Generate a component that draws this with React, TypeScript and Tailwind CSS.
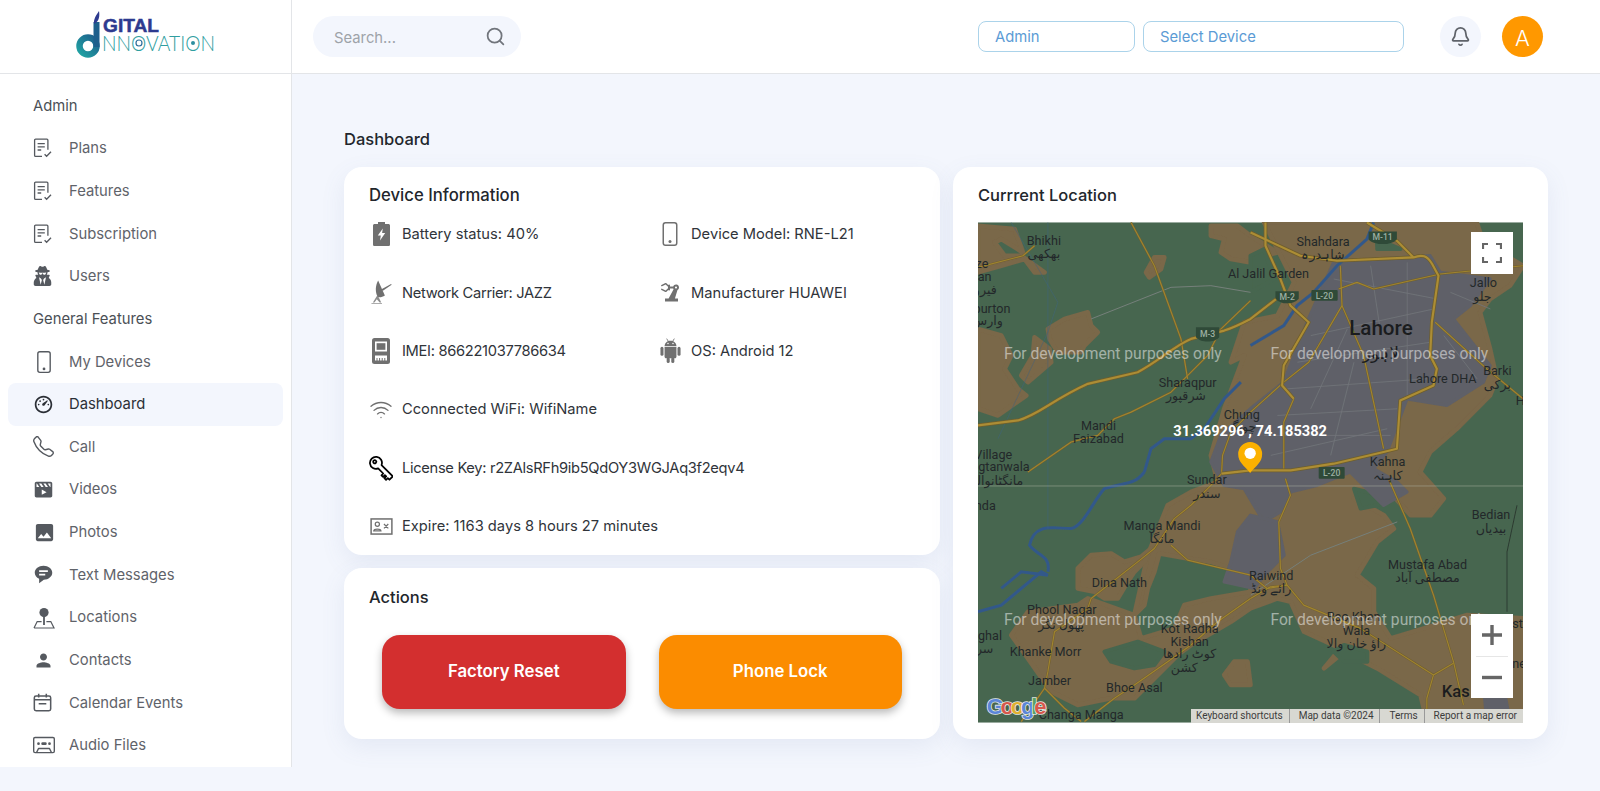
import { Bell, Search, Wifi } from 'lucide-react'
import { BiSolidMessageRoundedDetail, BiSolidMoviePlay } from 'react-icons/bi'
import { BsCassette, BsPhone, BsTelephone } from 'react-icons/bs'
import { FaUserSecret } from 'react-icons/fa'
import { MdPerson, MdPhoto, MdPrecisionManufacturing } from 'react-icons/md'
import { RiDashboard3Line } from 'react-icons/ri'

const font = { fontFamily: 'Inter, "Noto Sans", sans-serif' }

function ChecklistIcon() {
  return (
    <svg viewBox="0 0 20 20" className="w-[20px] h-[20px]" fill="none" stroke="#55595f" strokeWidth="1.3">
      <path d="M9 18.4H2.6c-.6 0-1-.4-1-1V2.2c0-.6.4-1 1-1h11.3c.6 0 1 .4 1 1v9.6" />
      <path d="M4.6 5.6h7.2M4.6 8.8h7.2M4.6 12h3.6" />
      <path d="M11.6 16.2l2 2.1 4.4-4.6" />
    </svg>
  )
}

function PinPlaneIcon() {
  return (
    <svg viewBox="0 0 22 22" className="w-[22px] h-[22px]" fill="none" stroke="#55595f" strokeWidth="1.2">
      <circle cx="11" cy="5.6" r="4.6" fill="#55595f" stroke="none" />
      <path d="M11 9v9" strokeWidth="1.8" />
      <path d="M1 21l3.2-6.4h4.4M13.4 14.6h4.4L21 21H1" />
    </svg>
  )
}

function CalendarIcon() {
  return (
    <svg viewBox="0 0 20 20" className="w-[19px] h-[19px]" fill="none" stroke="#55595f" strokeWidth="1.6">
      <rect x="1.4" y="3.2" width="17.2" height="15.4" rx="1.8" />
      <path d="M6 .8v4M14 .8v4M1.6 7.2h17M6 11.4h8" />
    </svg>
  )
}

function BatteryIcon() {
  return (
    <svg viewBox="0 0 17 24" className="w-[17px] h-[24px]">
      <path d="M5 0h7v2h3.4c.9 0 1.6.7 1.6 1.6v18.8c0 .9-.7 1.6-1.6 1.6H1.6C.7 24 0 23.3 0 22.4V3.6C0 2.7.7 2 1.6 2H5z" fill="#707070" />
      <path d="M9.8 6.5L4.8 13.6h3l-.8 4.8 5.2-7.4h-3.100z" fill="#fff" />
    </svg>
  )
}

function DishIcon() {
  return (
    <svg viewBox="0 0 24 26" className="w-[23px] h-[25px]" fill="#707070">
      <path d="M8.5 0.5C5.5 6 5.2 12.5 8 17.5c2 .8 5 .2 7.5-1.500z" />
      <path d="M12 9.5l10-5.5 .6 1-9.500 6.500z" />
      <path d="M7.500 16L3 23.500h1.600l2.500-3.500 3 3.500h1.600L8.800 17.500z" opacity="0.8" />
      <path d="M1.500 25h11v-1h-11z" opacity="0.6" />
    </svg>
  )
}

function ImeiIcon() {
  return (
    <svg viewBox="0 0 18 26" className="w-[18px] h-[26px]">
      <rect x="0" y="0" width="18" height="26" rx="2.5" fill="#707070" />
      <rect x="3" y="3.5" width="12" height="10" fill="#fff" />
      <rect x="4.6" y="5.2" width="8.8" height="6.6" fill="#707070" />
      <path d="M3 17.5h12v5H3z" fill="#fff" />
      <path d="M5 20v3M7.6 20v3M10.2 20v3M12.8 20v3" stroke="#707070" strokeWidth="1" />
    </svg>
  )
}

function AndroidIcon() {
  return (
    <svg viewBox="0 0 24 26" className="w-[23px] h-[25px]" fill="#707070">
      <path d="M5.800 8.300C6 4.800 8.600 2.700 12 2.700s6 2.100 6.200 5.600z" />
      <path d="M8 .6l1.800 3M16 .6l-1.800 3" stroke="#707070" strokeWidth="0.9" />
      <circle cx="9.400" cy="5.600" r="0.8" fill="#fff" />
      <circle cx="14.600" cy="5.600" r="0.8" fill="#fff" />
      <path d="M5.800 9.200h12.400v10.400c0 .9-.7 1.600-1.600 1.600H7.400c-.9 0-1.600-.7-1.600-1.600z" />
      <rect x="1.500" y="9.200" width="3.200" height="9.200" rx="1.600" />
      <rect x="19.300" y="9.200" width="3.200" height="9.200" rx="1.600" />
      <rect x="8" y="20" width="3.200" height="6" rx="1.600" />
      <rect x="12.800" y="20" width="3.200" height="6" rx="1.600" />
    </svg>
  )
}

function KeyIcon() {
  return (
    <svg viewBox="0 0 26 26" className="w-[26px] h-[26px]" fill="none" stroke="#000" strokeWidth="1.9" strokeLinejoin="round">
      <g transform="rotate(45 8 8)">
        <path d="M13.2 5.3H30.5V10.5H28V13.2H25.5V10.5H23.5V13.2H21V10.5H13.2A6.500 6.500 0 1 1 13.200 5.300z" />
        <circle cx="5.5" cy="8" r="1.7" />
      </g>
    </svg>
  )
}

function ExpireIcon() {
  return (
    <svg viewBox="0 0 24 18" className="w-[23px] h-[17px]" fill="none" stroke="#707070">
      <rect x="1" y="1" width="22" height="16" strokeWidth="1.6" />
      <circle cx="7.6" cy="6.6" r="2.2" strokeWidth="1.3" />
      <path d="M3.8 13.6c.4-2.4 7.2-2.4 7.6 0zM14.6 6.4l4.6 4.6M19.2 6.4l-4.6 4.6" strokeWidth="1.3" />
    </svg>
  )
}

const s = 'text-[#55595f]'
const adminItems = [
  { label: 'Plans', icon: <ChecklistIcon /> },
  { label: 'Features', icon: <ChecklistIcon /> },
  { label: 'Subscription', icon: <ChecklistIcon /> },
  { label: 'Users', icon: <FaUserSecret className={`w-[19px] h-[20px] ${s}`} /> },
]
const generalItems = [
  { label: 'My Devices', icon: <BsPhone className={`w-[22px] h-[22px] ${s}`} /> },
  { label: 'Dashboard', icon: <RiDashboard3Line className="w-[21px] h-[21px] text-[#2b2f36]" />, active: true },
  { label: 'Call', icon: <BsTelephone className={`w-[21px] h-[21px] ${s}`} /> },
  { label: 'Videos', icon: <BiSolidMoviePlay className={`w-[21px] h-[21px] ${s}`} /> },
  { label: 'Photos', icon: <MdPhoto className={`w-[23px] h-[23px] ${s}`} /> },
  { label: 'Text Messages', icon: <BiSolidMessageRoundedDetail className={`w-[21px] h-[21px] ${s}`} /> },
  { label: 'Locations', icon: <PinPlaneIcon /> },
  { label: 'Contacts', icon: <MdPerson className={`w-[21px] h-[21px] ${s}`} /> },
  { label: 'Calendar Events', icon: <CalendarIcon /> },
  { label: 'Audio Files', icon: <BsCassette className={`w-[22px] h-[22px] ${s}`} /> },
]

const g = 'text-[#707070]'
const infoRows = [
  { text: 'Battery status: 40%', icon: <BatteryIcon /> },
  { text: 'Device Model: RNE-L21', icon: <BsPhone className={`w-[26px] h-[26px] ${g}`} /> },
  { text: 'Network Carrier: JAZZ', icon: <DishIcon />, tight: true },
  { text: 'Manufacturer HUAWEI', icon: <MdPrecisionManufacturing className={`w-[27px] h-[27px] -scale-x-100 ${g}`} /> },
  { text: 'IMEI: 866221037786634', icon: <ImeiIcon />, tight: true },
  { text: 'OS: Android 12', icon: <AndroidIcon /> },
  { text: 'Cconnected WiFi: WifiName', icon: <Wifi className={`w-[25px] h-[25px] ${g}`} strokeWidth={1.3} /> },
  null,
  { text: 'License Key: r2ZAlsRFh9ib5QdOY3WGJAq3f2eqv4', icon: <KeyIcon />, wide: true, tight: true },
  null,
  { text: 'Expire: 1163 days 8 hours 27 minutes', icon: <ExpireIcon />, wide: true },
]

function NavRow({ label, icon, active }: { label: string; icon: React.ReactNode; active?: boolean }) {
  return (
    <div className={`flex items-center h-[42.65px] mx-[8px] px-[25px] rounded-lg ${active ? 'bg-[#f3f6fd] text-[#2b2f36]' : 'text-[#5f636a]'}`}>
      <span className="w-[36px] flex-none flex items-center">{icon}</span>
      <span className="text-[14.8px]">{label}</span>
    </div>
  )
}

function Logo() {
  return (
    <svg viewBox="0 0 150 52" className="w-[150px] h-[52px]">
      <defs>
        <linearGradient id="dbowl" x1="0" y1="1" x2="1" y2="0">
          <stop offset="0" stopColor="#21a3a3" />
          <stop offset="1" stopColor="#1d5f8c" />
        </linearGradient>
      </defs>
      <circle cx="16" cy="35" r="8.5" fill="none" stroke="url(#dbowl)" strokeWidth="6.5" />
      <path d="M21.5 36V11h6v25z" fill="#1d5f8c" />
      <path d="M22 13c-.5-5 2-8.500 5-13 .8 5 .5 10-5 13z" fill="#2d3a8f" />
      <text x="31" y="21" fontSize="19" fontWeight="700" fontFamily="Liberation Sans, sans-serif" fill="#2d3a8f" stroke="#2d3a8f" strokeWidth="0.5" textLength="56" lengthAdjust="spacingAndGlyphs">GITAL</text>
      <text x="30" y="40" fontSize="21" fontWeight="300" fontFamily="Lato, sans-serif" fill="#2f9ea0" textLength="113" lengthAdjust="spacingAndGlyphs">NNOVATION</text>
      <circle cx="67" cy="32" r="3" fill="none" stroke="#2d6f9c" strokeWidth="1.2" />
      <circle cx="121" cy="32" r="2" fill="#2d8fa0" />
    </svg>
  )
}

const labels: [string, number, number][] = [
  ['بھکھی', 198, 108], ['Bhikhi', 198, 68], ['ze', 12, 138], ['an', 20, 177], ['فیرو', 22, 215], ['burton', 42, 272], ['وارس', 28, 308],
  ['Al Jalil Garden', 873, 168], ['Mandi', 362, 625], ['Faizabad', 362, 663], ['Sharaqpur', 630, 495], ['شرقپور', 625, 535], ['Chung', 793, 590], ['چونگ', 793, 628],
  ['Village', 46, 712], ['gtanwala', 78, 748], ['مانگٹانوالہ', 55, 788], ['nda', 22, 865], ['Sundar', 688, 786], ['سندر', 688, 828],
  ['Manga Mandi', 553, 925], ['مانگا', 553, 963], ['Dina Nath', 425, 1095], ['Phool Nagar', 252, 1178], ['پھول نگر', 250, 1222], ['ghal', 36, 1255], ['سر', 20, 1295],
  ['Khanke Morr', 203, 1303], ['Jamber', 215, 1390], ['Bhoe Asal', 470, 1412], ['Changa Manga', 310, 1491], ['Kot Radha', 636, 1235], ['Kishan', 636, 1272], ['کوٹ رادھا', 636, 1310], ['کشن', 620, 1350],
  ['Shahdara', 1037, 72], ['شاہدرہ', 1037, 110], ['Jallo', 1519, 195], ['جلو', 1516, 235], ['Lahore DHA', 1397, 483], ['Barki', 1561, 458], ['برکی', 1561, 500], ['H', 1630, 548],
  ['Kahna', 1231, 733], ['کاہنہ', 1231, 775], ['Bedian', 1542, 890], ['بیدیاں', 1542, 932], ['Mustafa Abad', 1351, 1042], ['مصطفی آباد', 1351, 1080], ['Raiwind', 881, 1075], ['رائے ونڈ', 881, 1115],
  ['Rao Khan', 1129, 1198], ['Wala', 1137, 1240], ['راؤ خان والا', 1137, 1278], ['st', 1622, 1218], ['ne', 1626, 1340],
]

const majorRoads = [
  'M0 610L120 595C180 580 220 535 330 485L480 450C540 420 590 370 640 350L740 325C770 315 800 300 819 290L909 220',
  'M819 30L969 100L1079 115L1309 105C1335 95 1350 100 1365 125L1384 160L1364 300L1359 400L1379 440L1369 490L1269 535L1259 680L1219 690L1069 725L940 745L819 745L732 755',
  'M864 0V70L909 170L939 250L994 300L919 430L914 490L949 530',
  'M1169 0L1259 55L1309 105',
]

const minorRoads = [
  'M725 325L819 235',
  'M460 0L530 130L610 350L630 470',
  'M0 135L135 100L170 70',
  'M150 750L280 660L360 640L410 590L460 570L580 510L620 470L690 400L720 340',
  'M949 530L919 600V750',
  'M1089 130L1094 250L994 420L919 480L819 570L760 630L735 700L732 755L700 790L640 850L590 890L530 980L480 1020L340 1130L330 1160L230 1230L210 1350L200 1400L130 1500',
  'M1094 250L1159 400L1219 680',
  'M1084 200L1139 180L1189 200L1389 155L1638 130',
  'M1374 300L1529 440L1638 530',
  'M200 1400L260 1460L310 1500',
  'M819 1130L720 1200L640 1270L570 1320L470 1390L410 1430L320 1500',
  'M580 970L630 1015L819 1060L869 1100L929 1090',
  'M924 770L939 820L904 900L909 1040L929 1090L879 1095L819 1130',
  'M929 1090L979 1150L1149 1220L1369 1360L1349 1430L1349 1503',
  'M1234 770L1299 920L1369 1120L1429 1320L1459 1450',
  'M1369 1360L1429 1325',
]

const streets =
  'M1069 170L1380 230M1000 340L1370 260M960 420L1360 360M930 500L1350 470M900 580L1260 560M1180 130L1210 330M1290 120L1290 520M1000 560L1110 320M1130 420L1060 700M860 640L1240 640M880 700L1230 620M1420 210L1540 260M1400 340L1500 470'

function MapDrawing() {
  return (
    <svg viewBox="0 0 1638 1503" className="absolute inset-0 w-full h-full" fontFamily="Roboto, 'DejaVu Sans', sans-serif">
      <defs>
        <filter id="soft" x="0" y="0" width="100%" height="100%">
          <feGaussianBlur stdDeviation="1.8" />
        </filter>
      </defs>
      <rect width="1638" height="1503" fill="#47664f" />
      <g filter="url(#soft)">
        <g fill="#7a6748" stroke="#7a6748" strokeWidth="14" strokeLinejoin="round">
          <path d="M0 10L110 20L135 90L70 50L50 60L80 100L130 100L200 150L170 150L140 110L70 130L0 150z" />
          <path d="M0 320L70 340L100 400L80 440L120 500L145 520L60 580L0 560z" />
          <path d="M170 345L215 380L220 420L150 480L130 460L165 400z" />
          <path d="M210 320L260 290L330 270L340 310L360 330L320 370L310 390L240 390L215 350z" />
          <path d="M505 150L530 105L560 105L550 140L515 165z" />
          <path d="M700 10L780 10L819 40L900 90L860 100L819 120L760 110L730 90L740 50L700 40z" />
          <path d="M860 0H1499L1519 60L1638 130L1599 190L1539 230L1509 270L1539 380L1559 470L1539 520L1439 620L1359 690L1329 750L1400 830L1360 880L1300 880L1220 790L1130 830L1220 880L1250 920L1200 960L1170 1010L1140 1060L1190 1100L1190 1170L1240 1250L1340 1220L1470 1180L1638 1190V1503H1350L1330 1420L1200 1340L1100 1290L1040 1340L1090 1280L980 1230L940 1140L900 1130L819 1160L760 1200L640 1270L600 1300L470 1430L400 1430L300 1450L220 1410L150 1310L100 1240L150 1170L300 1150L330 1130L470 1180L490 1250L590 1220L620 1150L700 1130L819 1110V1060L700 1020L630 1010L545 995L530 1050L510 1100L500 1150L470 1180L510 1000L530 950L570 850L640 810L720 780L700 700L740 560L800 400L760 420L800 300L900 280L950 180z" />
          <path d="M300 1040L340 1000L400 995L440 1020L490 1005L520 980L500 1020L470 1050L450 1080L420 1130L380 1130L350 1110L300 1100z" />
          <path d="M740 1360L770 1320L810 1320L819 1390L760 1390z" />
        </g>
        <g fill="#47664f" stroke="#47664f" strokeWidth="12" strokeLinejoin="round">
          <path d="M380 1290L480 1260L560 1290L530 1330L470 1340L400 1320z" />
          <path d="M1069 1290L1100 1270L1170 1290L1170 1320L1100 1320z" />
          <path d="M1130 800L1170 810L1230 830L1200 850L1150 860z" />
          <path d="M819 100L860 80L890 170L819 210z" />
          <path d="M1199 50L1270 80L1200 80z" />
        </g>
        <g fill="#5f6167" stroke="#5f6167" strokeWidth="10" strokeLinejoin="round">
          <path d="M1069 120L1359 100L1389 150L1539 170L1479 250L1429 290L1539 430L1519 480L1409 550L1289 530L1259 610L1229 690L1189 740L1259 780L1289 810L1219 850L1119 750L1019 790L939 810L909 870L859 900L800 800L740 790L700 720L730 640L819 560L919 480L989 300L1069 120z" />
          <path d="M1520 1400L1570 1350L1600 1503L1530 1503z" />
          <path d="M780 930L819 880L900 900L920 1000L860 1060L830 1100L740 1080L760 1020z" />
        </g>
        <path d={streets} fill="none" stroke="#72747a" strokeWidth="2.5" />
        <path d="M0 1170L70 1150L190 1050L210 1060L130 1050L70 1100M500 750L520 680L560 650L640 650L680 620L700 590L740 530L790 480M819 370L919 310L959 250L1009 210L1079 130L1169 50L1189 0M500 750C470 790 440 780 380 800C350 830 320 910 280 920C230 920 170 900 155 970C175 1000 220 1000 210 1050" fill="none" stroke="#33598a" strokeWidth="9" />
        <path d="M210 0V750V920M100 0L240 240L210 330L60 650" fill="none" stroke="#3d6384" strokeWidth="2" opacity="0.7" />
        <path d="M340 290L580 195L700 190L819 210M820 1120L1000 1000L1260 900" fill="none" stroke="#75807a" strokeWidth="3" />
        <g fill="none" stroke="#6f5e2c" strokeWidth="6" strokeLinejoin="round">
          {minorRoads.map((d) => <path key={d} d={d} />)}
        </g>
        <g fill="none" stroke="#a08430" strokeWidth="3.5" strokeLinejoin="round">
          {minorRoads.map((d) => <path key={d} d={d} />)}
        </g>
        <g fill="none" stroke="#6f5e2c" strokeWidth="11" strokeLinejoin="round">
          {majorRoads.map((d) => <path key={d} d={d} />)}
        </g>
        <g fill="none" stroke="#ac8d34" strokeWidth="6.5" strokeLinejoin="round">
          {majorRoads.map((d) => <path key={d} d={d} />)}
        </g>
        <path d="M1620 850L1590 990L1590 1170" fill="none" stroke="#2c3a30" strokeWidth="3" />
      </g>
      <path d="M0 792H1638" stroke="#b0b8a8" strokeWidth="2" opacity="0.7" />
      <g fill="#2f4a38">
        <path d="M655 315h70v30c-10 10-20 13-35 13s-25-3-35-13z" />
        <path d="M894 207h70v22c-10 10-20 14-35 14s-25-4-35-14z" />
        <path d="M1174 27h85v24c-10 10-25 14-42 14s-33-4-43-14z" />
        <rect x="1002" y="203" width="79" height="32" rx="3" />
        <rect x="1024" y="735" width="78" height="35" rx="3" />
      </g>
      <g fill="#9db0a2" fontSize="26" textAnchor="middle" fontWeight="500">
        <text x="690" y="344">M-3</text>
        <text x="929" y="234">M-2</text>
        <text x="1216" y="53">M-11</text>
        <text x="1041" y="229">L-20</text>
        <text x="1063" y="762">L-20</text>
      </g>
      <g fill="#23282a" fontSize="38" textAnchor="middle">
        {labels.map(([t, x, y]) => <text key={t + x} x={x} y={y}>{t}</text>)}
        <text x="1211" y="338" fontSize="62" fontWeight="500" fill="#1a1c1e">Lahore</text>
        <text x="1211" y="410" fontSize="50" fill="#1a1c1e">لاہور</text>
        <text x="1436" y="1425" fontSize="50" fontWeight="500" fill="#1a1c1e">Kas</text>
      </g>
      <g fill="#fff" fillOpacity="0.5" fontSize="47">
        <text x="78" y="410">For development purposes only</text>
        <text x="879" y="410">For development purposes only</text>
        <text x="78" y="1210">For development purposes only</text>
        <text x="879" y="1210">For development purposes only</text>
      </g>
      <text x="818" y="643" textAnchor="middle" fill="#fff" fontSize="44" fontWeight="700">31.369296 , 74.185382</text>
      <path d="M818 753C800 730 782 722 782 696a36 36 0 0 1 72 0C854 722 836 730 818 753z" fill="#fbb100" />
      <circle cx="818" cy="694" r="17" fill="#fff" />
      <g fontSize="66" fontWeight="700" fontFamily="'Liberation Sans', sans-serif" stroke="#fff" strokeOpacity="0.85" strokeWidth="5" style={{ paintOrder: 'stroke' }}>
        <text x="26" y="1477" textLength="180"><tspan fill="#5b86d8">G</tspan><tspan fill="#d8584c">o</tspan><tspan fill="#e0b030">o</tspan><tspan fill="#5b86d8">g</tspan><tspan fill="#5aa063">l</tspan><tspan fill="#d8584c">e</tspan></text>
      </g>
    </svg>
  )
}

export default function App() {
  return (
    <div className="min-h-[791px] bg-[#f3f6fd]" style={font}>
      <header className="flex h-[74px] bg-white border-b border-[#e3e5e8]">
        <div className="w-[292px] flex-none border-r border-[#e3e5e8] flex items-center pl-[72px]">
          <Logo />
        </div>
        <div className="flex-1 flex items-center pl-[21px]">
          <div className="w-[208px] h-[41px] rounded-full bg-[#f3f6fd] flex items-center justify-between pl-[21px] pr-[15px]">
            <span className="text-[14.8px] text-[#9ea3a9] pt-[3px]">Search...</span>
            <Search className="w-[21px] h-[21px] text-[#71757c]" strokeWidth={2} />
          </div>
          <div className="ml-[457px] w-[157px] h-[31px] rounded-lg border border-[#abd3ea] flex items-center px-[16px] pt-[2px] text-[14.8px] text-[#5b9bd5]">Admin</div>
          <div className="ml-[8px] w-[261px] h-[31px] rounded-lg border border-[#abd3ea] flex items-center px-[16px] pt-[2px] text-[14.8px] text-[#5b9bd5]">Select Device</div>
          <div className="ml-[36px] w-[41px] h-[41px] rounded-full bg-[#f3f6fd] flex items-center justify-center">
            <Bell className="w-[21px] h-[21px] text-[#5f636a]" strokeWidth={2} />
          </div>
          <div className="ml-[21px] w-[41px] h-[41px] rounded-full bg-[#ff9800] flex items-center justify-center text-white text-[22px] font-light leading-none pt-[3px]">A</div>
        </div>
      </header>
      <div className="flex">
        <aside className="w-[292px] h-[693px] flex-none bg-white border-r border-[#e3e5e8] pt-[10.5px]">
          <div className="h-[42.65px] flex items-center pl-[33px] text-[14.8px] text-[#4b5056]">Admin</div>
          {adminItems.map((item) => <NavRow key={item.label} {...item} />)}
          <div className="h-[42.65px] flex items-center pl-[33px] text-[14.8px] text-[#4b5056]">General Features</div>
          {generalItems.map((item) => <NavRow key={item.label} {...item} />)}
        </aside>
        <main className="flex-1 pl-[52px] pr-[52px]">
          <h1 className="pt-[53px] h-[93px] leading-[24px] text-[16.5px] font-medium text-[#22262c]">Dashboard</h1>
          <div className="grid grid-cols-[596px_595px] gap-x-[13px]">
            <div className="flex flex-col gap-[13px]">
              <section className="h-[388px] bg-white rounded-[18px] shadow-[0_8px_24px_rgba(100,120,170,0.1)] pt-[18px] px-[25px]">
                <h2 className="h-[20px] leading-[20px] text-[16.7px] font-medium text-[#22262c]">Device Information</h2>
                <div className="grid grid-cols-[289px_1fr] auto-rows-[58.4px]">
                  {infoRows.map((row, i) =>
                    row ? (
                      <div key={row.text} className={`flex items-center text-[14.7px] text-[#30343a] whitespace-nowrap ${row.wide ? 'col-span-2' : ''} ${row.tight ? 'tracking-[-0.32px]' : ''}`}>
                        <span className="w-[33px] flex-none flex justify-center pr-[9px]">{row.icon}</span>
                        {row.text}
                      </div>
                    ) : i === 9 ? null : (
                      <div key={i} />
                    ),
                  )}
                </div>
              </section>
              <section className="h-[171px] bg-white rounded-[18px] shadow-[0_8px_24px_rgba(100,120,170,0.1)] pt-[19px] px-[25px]">
                <h2 className="h-[20px] leading-[20px] text-[16.5px] font-medium text-[#22262c]">Actions</h2>
                <div className="mt-[28px] mx-[13px] grid grid-cols-2 gap-[33px]">
                  <button className="h-[74px] rounded-[18px] bg-[#d32f2f] text-white text-[16.8px] font-semibold shadow-[0_4px_8px_rgba(0,0,0,0.28)]">Factory Reset</button>
                  <button className="h-[74px] rounded-[18px] bg-[#fb8c00] text-white text-[16.8px] font-semibold shadow-[0_4px_8px_rgba(0,0,0,0.28)]">Phone Lock</button>
                </div>
              </section>
            </div>
            <section className="h-[572px] bg-white rounded-[18px] shadow-[0_8px_24px_rgba(100,120,170,0.1)] pt-[18px] px-[25px]">
              <h2 className="h-[20px] leading-[20px] text-[16.5px] font-medium text-[#22262c]">Currrent Location</h2>
              <div className="relative mt-[17px] h-[501px] overflow-hidden" style={{ fontFamily: 'Roboto, sans-serif' }}>
                <MapDrawing />
                <button className="absolute top-[10px] right-[10px] w-[42px] h-[42px] bg-white flex items-center justify-center">
                  <svg viewBox="0 0 20 20" className="w-[20px] h-[20px]" fill="none" stroke="#666" strokeWidth="2.2">
                    <path d="M1 6V1h5M14 1h5v5M1 14v5h5M14 19h5v-5" />
                  </svg>
                </button>
                <div className="absolute top-[392px] right-[10px] w-[42px] h-[84px] bg-white flex flex-col items-center">
                  <svg viewBox="0 0 20 20" className="w-[20px] h-[42px]" fill="none" stroke="#666" strokeWidth="3.4"><path d="M10 0v20M0 10h20" /></svg>
                  <div className="w-[32px] h-px bg-[#e6e6e6]" />
                  <svg viewBox="0 0 20 20" className="w-[20px] h-[41px]" fill="none" stroke="#666" strokeWidth="3.4"><path d="M0 10h20" /></svg>
                </div>
                <div className="absolute bottom-0 right-0 h-[14px] w-[332px] bg-[#d8d8d2] flex items-center justify-between text-[10px] text-[#3c3c3c] leading-none">
                  <span className="pl-[5px] pr-[6px] border-r border-[#999] h-full flex items-center">Keyboard shortcuts</span>
                  <span className="px-[5px] border-r border-[#999] h-full flex items-center">Map data ©2024</span>
                  <span className="px-[6px] border-r border-[#999] h-full flex items-center">Terms</span>
                  <span className="pl-[5px] pr-[6px] h-full flex items-center">Report a map error</span>
                </div>
              </div>
            </section>
          </div>
        </main>
      </div>
    </div>
  )
}
